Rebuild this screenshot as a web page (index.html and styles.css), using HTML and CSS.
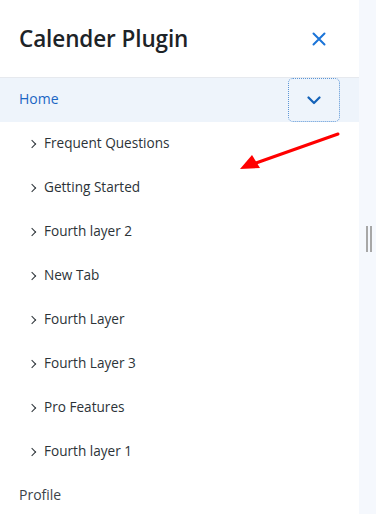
FILE: index.html
```html
<!DOCTYPE html>
<html>
<head>
<meta charset="utf-8">
<link rel="stylesheet" href="styles.css">
</head>
<body>
<div class="page">
  <aside class="panel">
    <header class="head">
      <h1 class="title">Calender Plugin</h1>
      <button class="close" aria-label="close">
        <svg width="14" height="14" viewBox="0 0 14 14"><path d="M1.5 1.5 L12.5 12.5 M12.5 1.5 L1.5 12.5" stroke="#1b74d8" stroke-width="2" stroke-linecap="round" fill="none"/></svg>
      </button>
    </header>
    <nav class="menu">
      <div class="row home">
        <span class="home-label">Home</span>
        <button class="toggle" aria-label="toggle">
          <svg width="14" height="9" viewBox="0 0 14 9"><path d="M1.5 1.5 L7 7 L12.5 1.5" stroke="#1462b8" stroke-width="2.2" fill="none" stroke-linecap="round" stroke-linejoin="round"/></svg>
        </button>
      </div>
      <ul class="sub">
        <li class="sub-item"><span class="chev"></span>Frequent Questions</li>
        <li class="sub-item"><span class="chev"></span>Getting Started</li>
        <li class="sub-item"><span class="chev"></span>Fourth layer 2</li>
        <li class="sub-item"><span class="chev"></span>New Tab</li>
        <li class="sub-item"><span class="chev"></span>Fourth Layer</li>
        <li class="sub-item"><span class="chev"></span>Fourth Layer 3</li>
        <li class="sub-item"><span class="chev"></span>Pro Features</li>
        <li class="sub-item"><span class="chev"></span>Fourth layer 1</li>
      </ul>
      <div class="row top">Profile</div>
    </nav>
  </aside>
  <div class="rail"><span class="grip"></span></div>
  <svg class="arrow" width="110" height="45" viewBox="0 0 110 45"><path d="M100 5 L18 34" stroke="#f00" stroke-width="3" stroke-linecap="round" fill="none"/><path d="M2 40 L14 26 L22 39 Z" fill="#f00"/></svg>
</div>
</body>
</html>
```
FILE: styles.css
```css
* { box-sizing: border-box; }
html, body { margin: 0; padding: 0; }
body {
  background: #f5f8fd;
  font-family: "Open Sans", "Noto Sans", sans-serif;
  width: 376px;
  height: 514px;
  overflow: hidden;
}
.page {
  position: relative;
  display: flex;
  height: 514px;
}
.panel {
  width: 359px;
  background: #fff;
  display: flex;
  flex-direction: column;
  overflow: hidden;
}
.head {
  flex-shrink: 0;
  height: 78px;
  border-bottom: 1px solid #e6e9ee;
  display: flex;
  align-items: center;
  justify-content: space-between;
  padding: 0 33px 0 19px;
}
.title {
  margin: 0;
  font-size: 22.5px;
  font-weight: 600;
  color: #1d2327;
  letter-spacing: -0.1px;
}
.close {
  border: 0;
  background: none;
  padding: 0;
  width: 14px;
  height: 14px;
  display: flex;
}
.menu { display: flex; flex-direction: column; flex-shrink: 0; }
.row {
  flex-shrink: 0;
  height: 44px;
  display: flex;
  align-items: center;
  padding-left: 19px;
  padding-bottom: 3px;
  font-size: 14px;
  color: #3c434a;
}
.home {
  background: #eef4fb;
  justify-content: space-between;
  padding-right: 19px;
}
.home-label { color: #1b66c4; }
.toggle {
  width: 52px;
  height: 44px;
  border: 1px dotted #5b95d6;
  border-radius: 5px;
  background: transparent;
  display: flex;
  align-items: center;
  justify-content: center;
  padding: 0;
  position: relative;
  top: 1.5px;
}
.sub { list-style: none; margin: 0; padding: 0; }
.sub-item {
  height: 44px;
  display: flex;
  align-items: center;
  padding-left: 31px;
  padding-bottom: 3px;
  font-size: 13.6px;
  color: #2c3338;
}
.chev {
  width: 6px;
  height: 6px;
  border-right: 1.5px solid #2c3338;
  border-bottom: 1.5px solid #2c3338;
  transform: rotate(-45deg);
  margin-right: 9px;
  margin-left: -2px;
  position: relative;
  top: 1px;
}
.top { color: #3c434a; }
.rail {
  flex: 1;
  position: relative;
}
.grip {
  position: absolute;
  left: 7px;
  top: 226px;
  width: 6px;
  height: 26px;
  border-left: 2px solid #a7a7a7;
  border-right: 2px solid #a7a7a7;
}
.arrow {
  position: absolute;
  left: 238px;
  top: 129px;
}
```
